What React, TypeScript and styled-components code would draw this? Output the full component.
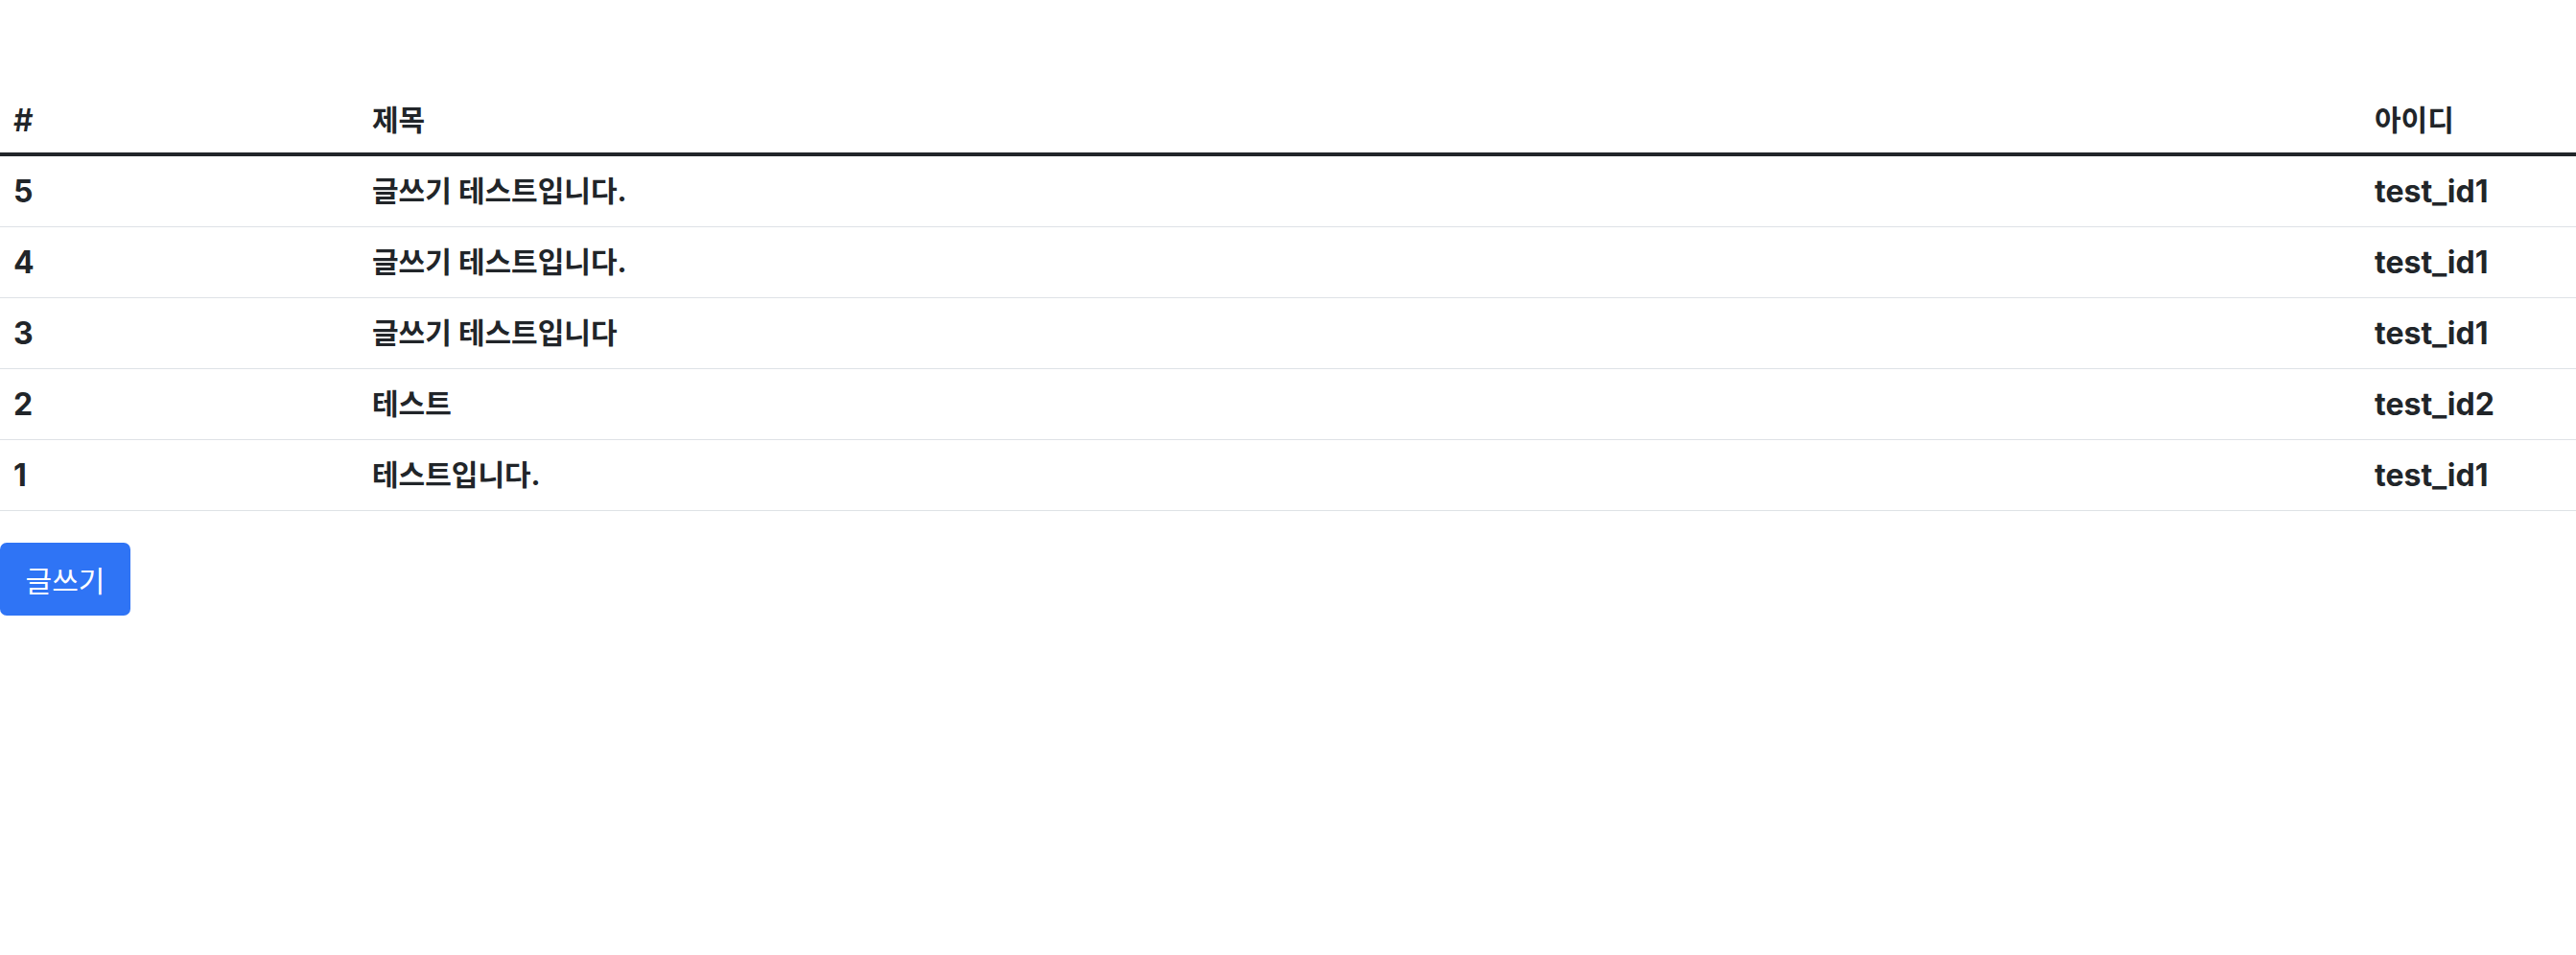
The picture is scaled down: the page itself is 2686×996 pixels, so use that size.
import React from "react";
import styled, { createGlobalStyle, css } from "styled-components";

const GlobalStyle = createGlobalStyle`
  html, body {
    margin: 0;
    padding: 0;
    background: #ffffff;
  }
  body {
    font-family: "Inter", "Noto Sans CJK KR", sans-serif;
    color: #212529;
  }
`;

type Script = "ko" | "latin";

const sizeFor = (s?: Script) =>
  s === "ko"
    ? css`
        font-size: 30px;
      `
    : css`
        font-size: 32px;
      `;

const Page = styled.div`
  padding-top: 90px;
  display: flex;
  flex-direction: column;
  align-items: flex-start;
`;

const Table = styled.table`
  width: 100%;
  border-collapse: collapse;
  table-layout: fixed;
  margin-bottom: 33px;
`;

const HeadCell = styled.th<{ $w?: string; $script?: Script }>`
  width: ${(p) => p.$w ?? "auto"};
  text-align: left;
  ${(p) => sizeFor(p.$script)}
  font-weight: 600;
  line-height: 45px;
  padding: 13px 14px 11px;
  border-bottom: 4px solid #212529;
  color: #212529;
`;

const Row = styled.tr`
  border-bottom: 1px solid #dee2e6;
`;

const Cell = styled.td<{ $script?: Script }>`
  ${(p) => sizeFor(p.$script)}
  font-weight: 700;
  line-height: 45px;
  padding: 14px 14px;
  color: #212529;
  white-space: nowrap;
`;

const WriteButton = styled.button`
  width: 136px;
  height: 76px;
  border: none;
  border-radius: 7px;
  background: #2f74f5;
  color: #ffffff;
  font-family: "Inter", "Noto Sans CJK KR", sans-serif;
  font-size: 30px;
  font-weight: 400;
  padding: 0;
  cursor: pointer;
`;

const rows = [
  { no: 5, title: "글쓰기 테스트입니다.", id: "test_id1" },
  { no: 4, title: "글쓰기 테스트입니다.", id: "test_id1" },
  { no: 3, title: "글쓰기 테스트입니다", id: "test_id1" },
  { no: 2, title: "테스트", id: "test_id2" },
  { no: 1, title: "테스트입니다.", id: "test_id1" },
];

export default function App() {
  return (
    <>
      <GlobalStyle />
      <Page>
        <Table>
          <thead>
            <tr>
              <HeadCell $w="346px">#</HeadCell>
              <HeadCell $script="ko">제목</HeadCell>
              <HeadCell $w="196px" $script="ko">
                아이디
              </HeadCell>
            </tr>
          </thead>
          <tbody>
            {rows.map((r) => (
              <Row key={r.no}>
                <Cell>{r.no}</Cell>
                <Cell $script="ko">{r.title}</Cell>
                <Cell>{r.id}</Cell>
              </Row>
            ))}
          </tbody>
        </Table>
        <WriteButton>글쓰기</WriteButton>
      </Page>
    </>
  );
}
